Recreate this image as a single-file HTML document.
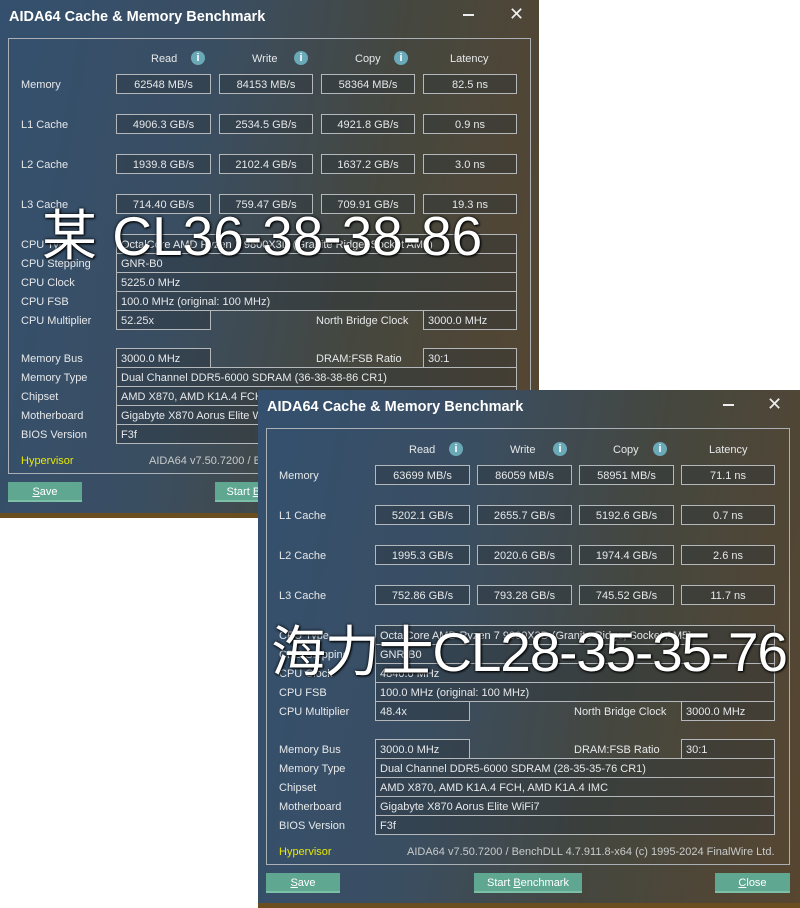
<!DOCTYPE html>
<html><head><meta charset="utf-8"><style>
*{margin:0;padding:0;box-sizing:border-box}
body{width:800px;height:908px;background:#fff;position:relative;overflow:hidden;font-family:"Liberation Sans","DejaVu Sans",sans-serif;font-size:11px;color:#e6e8ea}
.win{position:absolute;overflow:hidden;background:linear-gradient(100deg,#34506e 0%,#3a4e62 35%,#45473f 65%,#574630 100%)}
.win::after{content:"";position:absolute;left:0;right:0;bottom:0;height:5px;background:#6b4e20}
.t{position:absolute;left:9px;top:9px;font-size:14.5px;font-weight:bold;color:#fff}
.min{position:absolute;top:14px;width:11px;height:1.5px;background:#eee}
.x{position:absolute;top:4px;font-size:18px;color:#eee}
.panel{position:absolute;left:8px;top:38px;border:1px solid #aab0b5}
.a{position:absolute;white-space:nowrap;margin-top:1px}
.b{position:absolute;border:1px solid #b4b8bb;height:20px;line-height:20px;white-space:nowrap;overflow:hidden;background:rgba(40,50,55,.35)}
.c{text-align:center}
.l{padding-left:4px}
.i{position:absolute;width:14px;height:14px;border-radius:50%;background:#6aa9b7;color:#fff;font-weight:bold;font-size:11px;text-align:center;line-height:14px}
.btn{position:absolute;height:20px;background:#5fa791;color:#fff;text-align:center;line-height:20px;border-bottom:2px solid #7cc0a8}
.hy{color:#e8e800}
.big{position:absolute;color:#fff;font-family:"Liberation Sans","Noto Sans CJK SC",sans-serif;text-shadow:1px 1px 2px #000,0 0 3px #000;white-space:nowrap;z-index:5}
</style></head><body>

<!-- Window 1 -->
<div class="win" style="left:0;top:0;width:539px;height:518px">
<div class="t">AIDA64 Cache &amp; Memory Benchmark</div>
<div class="min" style="left:463px"></div><div class="x" style="left:509px">✕</div>
<div class="panel" style="width:523px;height:436px"></div>
<div class="a" style="left:151px;top:52px">Read</div><div class="i" style="left:191px;top:51px">i</div>
<div class="a" style="left:252px;top:52px">Write</div><div class="i" style="left:294px;top:51px">i</div>
<div class="a" style="left:355px;top:52px">Copy</div><div class="i" style="left:394px;top:51px">i</div>
<div class="a" style="left:450px;top:52px">Latency</div>

<div class="a" style="left:21px;top:78px">Memory</div>
<div class="b c" style="left:116px;top:74px;width:95px">62548 MB/s</div><div class="b c" style="left:219px;top:74px;width:94px">84153 MB/s</div><div class="b c" style="left:321px;top:74px;width:94px">58364 MB/s</div><div class="b c" style="left:423px;top:74px;width:94px">82.5 ns</div>
<div class="a" style="left:21px;top:118px">L1 Cache</div>
<div class="b c" style="left:116px;top:114px;width:95px">4906.3 GB/s</div><div class="b c" style="left:219px;top:114px;width:94px">2534.5 GB/s</div><div class="b c" style="left:321px;top:114px;width:94px">4921.8 GB/s</div><div class="b c" style="left:423px;top:114px;width:94px">0.9 ns</div>
<div class="a" style="left:21px;top:158px">L2 Cache</div>
<div class="b c" style="left:116px;top:154px;width:95px">1939.8 GB/s</div><div class="b c" style="left:219px;top:154px;width:94px">2102.4 GB/s</div><div class="b c" style="left:321px;top:154px;width:94px">1637.2 GB/s</div><div class="b c" style="left:423px;top:154px;width:94px">3.0 ns</div>
<div class="a" style="left:21px;top:198px">L3 Cache</div>
<div class="b c" style="left:116px;top:194px;width:95px">714.40 GB/s</div><div class="b c" style="left:219px;top:194px;width:94px">759.47 GB/s</div><div class="b c" style="left:321px;top:194px;width:94px">709.91 GB/s</div><div class="b c" style="left:423px;top:194px;width:94px">19.3 ns</div>

<div class="a" style="left:21px;top:238px">CPU Type</div><div class="b l" style="left:116px;top:234px;width:401px">OctalCore AMD Ryzen 7 9800X3D  (Granite Ridge, Socket AM5)</div>
<div class="a" style="left:21px;top:257px">CPU Stepping</div><div class="b l" style="left:116px;top:253px;width:401px">GNR-B0</div>
<div class="a" style="left:21px;top:276px">CPU Clock</div><div class="b l" style="left:116px;top:272px;width:401px">5225.0 MHz</div>
<div class="a" style="left:21px;top:295px">CPU FSB</div><div class="b l" style="left:116px;top:291px;width:401px">100.0 MHz  (original: 100 MHz)</div>
<div class="a" style="left:21px;top:314px">CPU Multiplier</div><div class="b l" style="left:116px;top:310px;width:95px">52.25x</div>
<div class="a" style="left:316px;top:314px">North Bridge Clock</div><div class="b l" style="left:423px;top:310px;width:94px">3000.0 MHz</div>

<div class="a" style="left:21px;top:352px">Memory Bus</div><div class="b l" style="left:116px;top:348px;width:95px">3000.0 MHz</div>
<div class="a" style="left:316px;top:352px">DRAM:FSB Ratio</div><div class="b l" style="left:423px;top:348px;width:94px">30:1</div>
<div class="a" style="left:21px;top:371px">Memory Type</div><div class="b l" style="left:116px;top:367px;width:401px">Dual Channel DDR5-6000 SDRAM  (36-38-38-86 CR1)</div>
<div class="a" style="left:21px;top:390px">Chipset</div><div class="b l" style="left:116px;top:386px;width:401px">AMD X870, AMD K1A.4 FCH, AMD K1A.4 IMC</div>
<div class="a" style="left:21px;top:409px">Motherboard</div><div class="b l" style="left:116px;top:405px;width:401px">Gigabyte X870 Aorus Elite WiFi7</div>
<div class="a" style="left:21px;top:428px">BIOS Version</div><div class="b l" style="left:116px;top:424px;width:401px">F3f</div>
<div class="a hy" style="left:21px;top:454px">Hypervisor</div>
<div class="a" style="left:149px;top:454px;color:#c8cbcc">AIDA64 v7.50.7200 / BenchDLL 4.7.911.8-x64  (c) 1995-2024 FinalWire Ltd.</div>
<div class="btn" style="left:8px;top:482px;width:74px"><u>S</u>ave</div>
<div class="btn" style="left:215px;top:482px;width:105px">Start <u>B</u>enchmark</div>
</div>
<div class="big" style="left:42px;top:201px;font-size:55px;line-height:70px">某 CL36-38-38-86</div>

<!-- Window 2 -->
<div class="win" style="left:258px;top:390px;width:542px;height:518px">
<div class="t">AIDA64 Cache &amp; Memory Benchmark</div>
<div class="min" style="left:465px"></div><div class="x" style="left:509px">✕</div>
<div class="panel" style="width:524px;height:437px"></div>
<div class="a" style="left:151px;top:53px">Read</div><div class="i" style="left:191px;top:52px">i</div>
<div class="a" style="left:252px;top:53px">Write</div><div class="i" style="left:295px;top:52px">i</div>
<div class="a" style="left:355px;top:53px">Copy</div><div class="i" style="left:395px;top:52px">i</div>
<div class="a" style="left:451px;top:53px">Latency</div>

<div class="a" style="left:21px;top:79px">Memory</div>
<div class="b c" style="left:117px;top:75px;width:95px">63699 MB/s</div><div class="b c" style="left:219px;top:75px;width:95px">86059 MB/s</div><div class="b c" style="left:321px;top:75px;width:95px">58951 MB/s</div><div class="b c" style="left:423px;top:75px;width:94px">71.1 ns</div>
<div class="a" style="left:21px;top:119px">L1 Cache</div>
<div class="b c" style="left:117px;top:115px;width:95px">5202.1 GB/s</div><div class="b c" style="left:219px;top:115px;width:95px">2655.7 GB/s</div><div class="b c" style="left:321px;top:115px;width:95px">5192.6 GB/s</div><div class="b c" style="left:423px;top:115px;width:94px">0.7 ns</div>
<div class="a" style="left:21px;top:159px">L2 Cache</div>
<div class="b c" style="left:117px;top:155px;width:95px">1995.3 GB/s</div><div class="b c" style="left:219px;top:155px;width:95px">2020.6 GB/s</div><div class="b c" style="left:321px;top:155px;width:95px">1974.4 GB/s</div><div class="b c" style="left:423px;top:155px;width:94px">2.6 ns</div>
<div class="a" style="left:21px;top:199px">L3 Cache</div>
<div class="b c" style="left:117px;top:195px;width:95px">752.86 GB/s</div><div class="b c" style="left:219px;top:195px;width:95px">793.28 GB/s</div><div class="b c" style="left:321px;top:195px;width:95px">745.52 GB/s</div><div class="b c" style="left:423px;top:195px;width:94px">11.7 ns</div>

<div class="a" style="left:21px;top:239px">CPU Type</div><div class="b l" style="left:117px;top:235px;width:400px">OctalCore AMD Ryzen 7 9800X3D  (Granite Ridge, Socket AM5)</div>
<div class="a" style="left:21px;top:258px">CPU Stepping</div><div class="b l" style="left:117px;top:254px;width:400px">GNR-B0</div>
<div class="a" style="left:21px;top:277px">CPU Clock</div><div class="b l" style="left:117px;top:273px;width:400px">4840.0 MHz</div>
<div class="a" style="left:21px;top:296px">CPU FSB</div><div class="b l" style="left:117px;top:292px;width:400px">100.0 MHz  (original: 100 MHz)</div>
<div class="a" style="left:21px;top:315px">CPU Multiplier</div><div class="b l" style="left:117px;top:311px;width:95px">48.4x</div>
<div class="a" style="left:316px;top:315px">North Bridge Clock</div><div class="b l" style="left:423px;top:311px;width:94px">3000.0 MHz</div>

<div class="a" style="left:21px;top:353px">Memory Bus</div><div class="b l" style="left:117px;top:349px;width:95px">3000.0 MHz</div>
<div class="a" style="left:316px;top:353px">DRAM:FSB Ratio</div><div class="b l" style="left:423px;top:349px;width:94px">30:1</div>
<div class="a" style="left:21px;top:372px">Memory Type</div><div class="b l" style="left:117px;top:368px;width:400px">Dual Channel DDR5-6000 SDRAM  (28-35-35-76 CR1)</div>
<div class="a" style="left:21px;top:391px">Chipset</div><div class="b l" style="left:117px;top:387px;width:400px">AMD X870, AMD K1A.4 FCH, AMD K1A.4 IMC</div>
<div class="a" style="left:21px;top:410px">Motherboard</div><div class="b l" style="left:117px;top:406px;width:400px">Gigabyte X870 Aorus Elite WiFi7</div>
<div class="a" style="left:21px;top:429px">BIOS Version</div><div class="b l" style="left:117px;top:425px;width:400px">F3f</div>
<div class="a hy" style="left:21px;top:455px">Hypervisor</div>
<div class="a" style="left:149px;top:455px;color:#c8cbcc">AIDA64 v7.50.7200 / BenchDLL 4.7.911.8-x64  (c) 1995-2024 FinalWire Ltd.</div>
<div class="btn" style="left:8px;top:483px;width:74px"><u>S</u>ave</div>
<div class="btn" style="left:216px;top:483px;width:108px">Start <u>B</u>enchmark</div>
<div class="btn" style="left:457px;top:483px;width:75px"><u>C</u>lose</div>
</div>
<div class="big" style="left:271px;top:617px;font-size:55px;line-height:70px;letter-spacing:-1.2px">海力士CL28-35-35-76</div>
</body></html>
